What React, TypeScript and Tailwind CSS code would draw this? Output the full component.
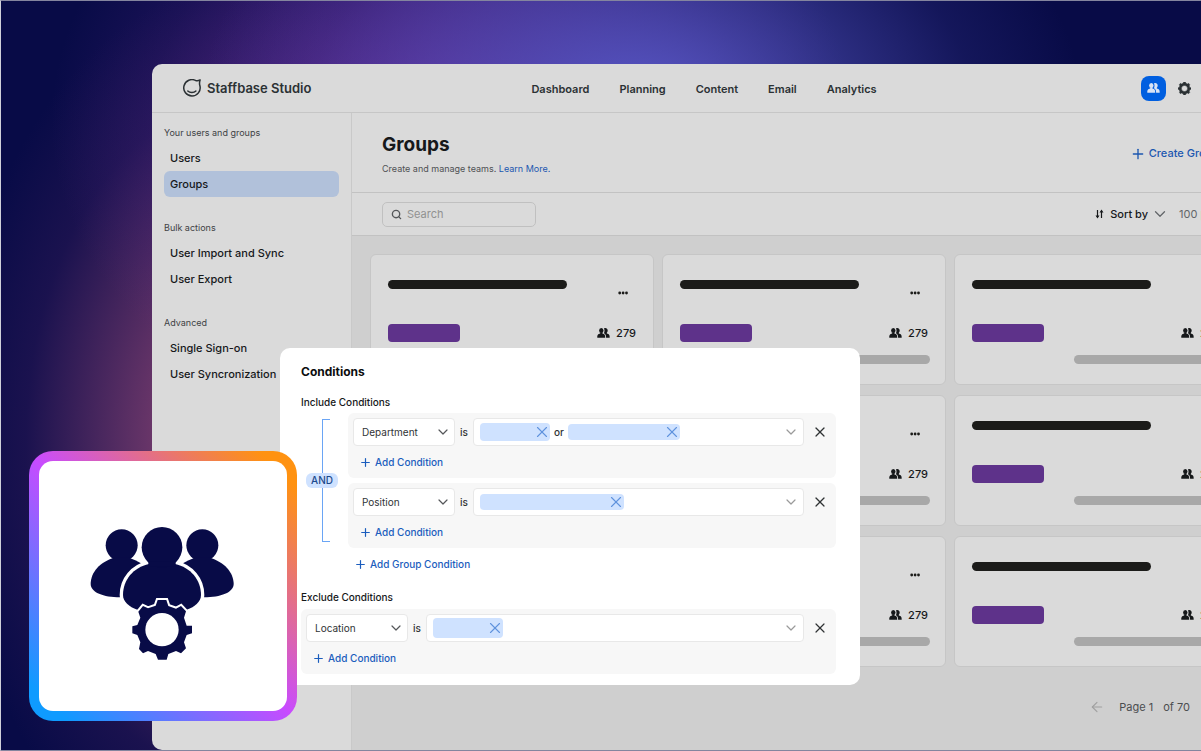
import React from "react";
import { ArrowLeft, ChevronDown, Plus, Search, X } from "lucide-react";

const GEAR_OUTLINE =
  "M233 255H259L265 273L288 281L303 273L318 289L312 308L320 332L336 332V355L320 360L312 382L318 400L303 415L288 408L265 417L260 434H234L227 417L204 408L189 415L177 402L181 382L172 360L157 355V334L172 330L181 308L175 290L189 273L204 280L227 272Z";

function Logo() {
  return (
    <svg viewBox="0 0 18 18" className="size-[18px]" fill="none" stroke="#2b3134" strokeWidth="1.5" strokeLinejoin="round" strokeLinecap="round" aria-hidden="true">
      <path d="M17.1.9C15.700 1.800 14.300 2 13 1.700A8.200 8.200 0 1 0 16.900 6.800C16.300 4.900 16.400 3 17.100.9Z" />
      <path d="M4.800 12C6.800 14.100 10.900 14.100 12.900 12" />
    </svg>
  );
}

function People({ className }: { className: string }) {
  return (
    <svg viewBox="0 0 13 10" className={className} fill="currentColor" aria-hidden="true">
      <ellipse cx="4.300" cy="2.500" rx="2.200" ry="2.500" />
      <path d="M3.200 4.400H5.400V5.600C7.600 6.300 8.200 6.800 8.200 9.700H.3C.3 6.800 1 6.300 3.200 5.600Z" />
      <path d="M7 .5C8.500-.5 10.700.4 10.700 2.500C10.700 3.500 10.300 4.300 9.800 4.700V5.600C12 6.300 12.700 6.800 12.700 9.700H9.100C9.100 7.600 8.700 6.500 7.300 5.600C7.100 5.500 7.100 4.900 7.100 4.700C7.600 3.500 7.700 1.900 7 .5Z" />
    </svg>
  );
}

function Gear({ className }: { className: string }) {
  return (
    <svg viewBox="156 254 180 180" className={className} aria-hidden="true">
      <path fill="currentColor" stroke="currentColor" strokeWidth="6" fillRule="evenodd" d={GEAR_OUTLINE + "M246 302A42 42 0 1 0 246 386A42 42 0 1 0 246 302Z"} />
    </svg>
  );
}

function Dots() {
  return (
    <svg viewBox="0 0 10 4" className="h-1 w-2.5" fill="currentColor" aria-hidden="true">
      <circle cx="1.700" cy="2" r="1.400" />
      <circle cx="5.100" cy="2" r="1.400" />
      <circle cx="8.500" cy="2" r="1.400" />
    </svg>
  );
}

function TeamArtwork() {
  return (
    <svg viewBox="0 0 495 465" className="h-[155px] w-[165px]" fill="#080b47" role="img" aria-label="User groups">
      <circle cx="125" cy="91" r="48" />
      <path d="M103 128C60 140 32 172 32 207C32 232 70 247 120 247H160L183 145C172 138 160 133 147 128Z" />
      <circle cx="367" cy="91" r="48" />
      <path d="M389 128C432 140 461 172 461 207C461 232 422 247 372 247H332L309 145C320 138 332 133 345 128Z" />
      <path stroke="#fff" strokeWidth="20" paintOrder="stroke" d="M207 147C160 157 129 195 129 240C129 260 147 276 172 284H320C345 276 363 260 363 240C363 195 332 157 285 147Z" />
      <circle cx="246" cy="97" r="61" />
      <path d="M205 140H287V155H205Z" />
      <path stroke="#fff" strokeWidth="12" paintOrder="stroke" d={GEAR_OUTLINE} />
      <circle cx="246" cy="344" r="50" fill="#fff" />
    </svg>
  );
}

const NAV = ["Dashboard", "Planning", "Content", "Email", "Analytics"];

function Header() {
  return (
    <header className="flex h-[49px] items-center border-b border-[#c6c6c6] text-[#2b3134]">
      <a href="#home" className="flex flex-1 items-center gap-1.5 pr-[34px] pl-[31px] text-[13px] font-semibold">
        <Logo />
        <span className="pt-px">Staffbase Studio</span>
      </a>
      <nav className="flex gap-[30px] pt-0.5 text-[11px] font-semibold">
        {NAV.map((item) => (
          <a key={item} href={"#" + item.toLowerCase()}>{item}</a>
        ))}
      </nav>
      <div className="flex flex-1 items-center justify-end gap-3 pr-[65px]">
        <button aria-label="Users" className="flex size-[25px] items-center justify-center rounded-lg bg-[#005fe0] text-[#d9e4f5]">
          <People className="h-2.5 w-[13px]" />
        </button>
        <button aria-label="Settings">
          <Gear className="size-[13px]" />
        </button>
      </div>
    </header>
  );
}

const SECTIONS = [
  { title: "Your users and groups", items: ["Users", "Groups"] },
  { title: "Bulk actions", items: ["User Import and Sync", "User Export"] },
  { title: "Advanced", items: ["Single Sign-on", "User Syncronization"] },
];

function Sidebar() {
  return (
    <aside className="flex w-[200px] shrink-0 flex-col gap-6 border-r border-[#c9c9c9] px-3 pt-[13px]">
      {SECTIONS.map((section) => (
        <section key={section.title}>
          <h2 className="mb-1.5 text-[9px] leading-[13px] text-[#404245]">{section.title}</h2>
          <ul>
            {section.items.map((item) => (
              <li key={item}>
                <a
                  href="#list"
                  className={
                    item === "Groups"
                      ? "block rounded-md bg-[#b1c1da] px-1.5 text-[11px] leading-[26px] font-medium text-[#16181a]"
                      : "block px-1.5 text-[11px] leading-[26px] font-medium text-[#16181a]"
                  }
                >
                  {item}
                </a>
              </li>
            ))}
          </ul>
        </section>
      ))}
    </aside>
  );
}

function GroupCard() {
  return (
    <article className="flex h-[131px] flex-col rounded-md border border-[#c6c6c6] bg-[#dadada] pr-[15px] pl-[17px]">
      <div className="flex h-[58px] justify-between pt-[25px]">
        <div className="h-[9px] w-[179px] rounded-full bg-[#1b1b19]" />
        <button aria-label="More options" className="mt-2 mr-2.5 flex h-2.5 items-center text-[#1b1b19]">
          <Dots />
        </button>
      </div>
      <div className="mt-[11px] flex h-[18px] items-center justify-between">
        <div className="h-[18px] w-[72px] rounded-sm bg-[#5e328a]" />
        <div className="flex items-center gap-1.5 pr-[2px] text-[11px] font-medium text-[#16181a]">
          <People className="h-2.5 w-[13px]" />
          279
        </div>
      </div>
      <div className="mt-[13px] h-[9px] w-[148px] self-end rounded-full bg-[#a8a8a8]" />
    </article>
  );
}

function GroupsPage() {
  return (
    <main className="flex min-w-0 flex-1 flex-col">
      <div className="flex h-20 items-center justify-between border-b border-[#c2c2c2] pt-0.5 pl-[30px]">
        <div>
          <h1 className="text-[19px] leading-6 font-bold text-[#16181a]">Groups</h1>
          <p className="mt-1.5 text-[9px] leading-3 text-[#4f5154]">
            Create and manage teams. <a href="#learn" className="text-[#1c57b0]">Learn More.</a>
          </p>
        </div>
        <button className="flex items-center gap-[3px] pr-[37px] text-[11px] font-medium text-[#1c57b0]">
          <Plus className="size-4" strokeWidth={2} />
          Create Group
        </button>
      </div>
      <div className="flex h-[43px] items-center justify-between border-b border-[#c2c2c2] pl-[30px]">
        <label className="flex h-[25px] w-[154px] items-center gap-[5px] rounded-[5px] border border-[#c0c0c0] px-2">
          <Search className="size-[11px] shrink-0 text-[#55575a]" strokeWidth={3} />
          <input type="search" aria-label="Search" placeholder="Search" className="w-full min-w-0 bg-transparent text-[11px] outline-none placeholder:text-[#919191]" />
        </label>
        <div className="flex items-center gap-2.5 pr-[9px] text-[11px]">
          <button className="flex items-center gap-[3px] font-medium text-[#16181a]">
            <svg viewBox="0 0 9 10" className="mr-[3px] h-2.5 w-[9px]" fill="none" stroke="currentColor" strokeWidth="1.2" aria-hidden="true">
              <path d="M2.500 1V8M6.500 9V2" />
              <path d="M.5 6.500H4.500L2.500 9.500ZM4.500 3.500H8.500L6.500.5Z" fill="currentColor" stroke="none" />
            </svg>
            Sort by
            <ChevronDown className="size-[18px] text-[#636669]" strokeWidth={1.7} />
          </button>
          <span className="text-[#636669]">100 per page</span>
        </div>
      </div>
      <div className="flex flex-1 flex-col bg-[#cfcfcf] px-[18px] pt-[18px]">
        <div className="grid grid-cols-3 gap-x-2 gap-y-2.5">
          {Array.from({ length: 9 }, (_, i) => (
            <GroupCard key={i} />
          ))}
        </div>
        <div className="mt-8 flex items-center justify-end pr-12 text-[11px] text-[#4b4d50]">
          <button aria-label="Previous page" className="mr-3.5 text-[#a0a0a0]">
            <ArrowLeft className="size-4" strokeWidth={1.7} />
          </button>
          <span className="mr-2.5">Page 1</span>
          <span>of 70</span>
        </div>
      </div>
    </main>
  );
}

function AddButton({ label, className }: { label: string; className: string }) {
  return (
    <button className={"flex items-center gap-[3px] text-[10px] leading-4 font-medium text-[#1b5dbd] " + className}>
      <Plus className="size-[13px]" strokeWidth={2.2} />
      {label}
    </button>
  );
}

function Chip({ className }: { className: string }) {
  return (
    <span className={"flex items-center justify-end rounded bg-[#cfe2ff] " + className}>
      <button aria-label="Remove value" className="-mr-px text-[#5f92dd]">
        <X className="size-[18px]" strokeWidth={1.5} />
      </button>
    </span>
  );
}

function Condition({ field, children }: { field: string; children: React.ReactNode }) {
  return (
    <div className="rounded-md bg-[#f7f7f7] px-[5px] pt-[5px] pb-2">
      <div className="flex items-center text-[10px] text-[#303335]">
        <div className="relative w-[102px]">
          <select aria-label="Field" defaultValue={field} className="h-7 w-full appearance-none rounded border border-[#e8e8e8] bg-white px-2 text-[10px]">
            <option>Department</option>
            <option>Position</option>
            <option>Location</option>
          </select>
          <ChevronDown className="pointer-events-none absolute top-1.5 right-1 size-4 text-[#55575a]" strokeWidth={1.8} />
        </div>
        <span className="mx-[5px] w-2 font-medium">is</span>
        <div className="flex h-7 flex-1 items-center rounded border border-[#e8e8e8] bg-white pr-1 pl-1.5">
          {children}
          <button aria-label="Show values" className="ml-auto text-[#9a9a9a]">
            <ChevronDown className="size-4" strokeWidth={1.8} />
          </button>
        </div>
        <button aria-label="Remove condition" className="mr-[3px] ml-2 text-[#2f3234]">
          <X className="size-4" strokeWidth={1.8} />
        </button>
      </div>
      <AddButton label="Add Condition" className="mt-2 ml-1.5" />
    </div>
  );
}

function ConditionsPanel() {
  return (
    <section role="dialog" aria-labelledby="conditions-title" className="absolute top-[347px] left-[279px] w-[580px] rounded-[10px] bg-white pt-4 pr-6 pb-[11px] pl-[21px]">
      <h2 id="conditions-title" className="text-[12px] leading-4 font-bold text-[#0c0d0e]">Conditions</h2>
      <h3 className="mt-[15px] text-[10px] leading-[14px] font-medium text-[#16181a]">Include Conditions</h3>
      <div className="mt-1 flex">
        <div className="mt-1.5 mb-1.5 ml-[5px] grid w-8 shrink-0 items-center">
          <div className="col-start-1 row-start-1 ml-4 h-full w-2 border-y border-l border-[#6aa5f5]" />
          <span className="z-10 col-start-1 row-start-1 rounded-md bg-[#cfe2ff] text-center text-[10px] leading-[15px] font-medium text-[#1d4a8c]">AND</span>
        </div>
        <div className="ml-2.5 flex flex-1 flex-col gap-[5px]">
          <Condition field="Department">
            <Chip className="h-[18px] w-[70px]" />
            <span className="w-[18px] text-center font-medium">or</span>
            <Chip className="h-4 w-28" />
          </Condition>
          <Condition field="Position">
            <Chip className="h-4 w-36" />
          </Condition>
        </div>
      </div>
      <AddButton label="Add Group Condition" className="mt-2 ml-[53px]" />
      <h3 className="mt-[18px] mb-[5px] text-[10px] leading-[14px] font-medium text-[#16181a]">Exclude Conditions</h3>
      <Condition field="Location">
        <Chip className="h-5 w-[70px]" />
      </Condition>
    </section>
  );
}

export default function App() {
  return (
    <div
      className="relative flex min-h-screen flex-col overflow-hidden border-y border-l border-y-[#84859f] border-l-[#cfd0da] bg-[#080b47] bg-[radial-gradient(440px_280px_at_640px_100px,#5656c4_0%,#5050ba99_40%,#4848b030_75%,#4848b000_100%),radial-gradient(400px_320px_at_450px_120px,#6a2f9a_0%,#6a2f9a99_40%,#6a2f9a30_75%,#6a2f9a00_100%),radial-gradient(300px_460px_at_250px_440px,#a4507c_0%,#94487899_40%,#6a307030_75%,#6a307000_100%)] pt-[63px] pl-[151px]"
      style={{ fontFamily: 'Inter, "Liberation Sans", sans-serif' }}
    >
      <div className="-mr-[55px] flex flex-1 flex-col overflow-hidden rounded-l-[10px] bg-[#dadada]">
        <Header />
        <div className="flex flex-1">
          <Sidebar />
          <GroupsPage />
        </div>
      </div>
      <ConditionsPanel />
      <div className="absolute top-[450px] left-7 rounded-3xl bg-linear-[45deg,#0f9bff_7%,#c84bff_50%,#ff9211_93%] p-2.5">
        <div className="flex h-[250px] w-[248px] items-center justify-center rounded-[14px] bg-white pt-[13px] pr-0.5">
          <TeamArtwork />
        </div>
      </div>
    </div>
  );
}
